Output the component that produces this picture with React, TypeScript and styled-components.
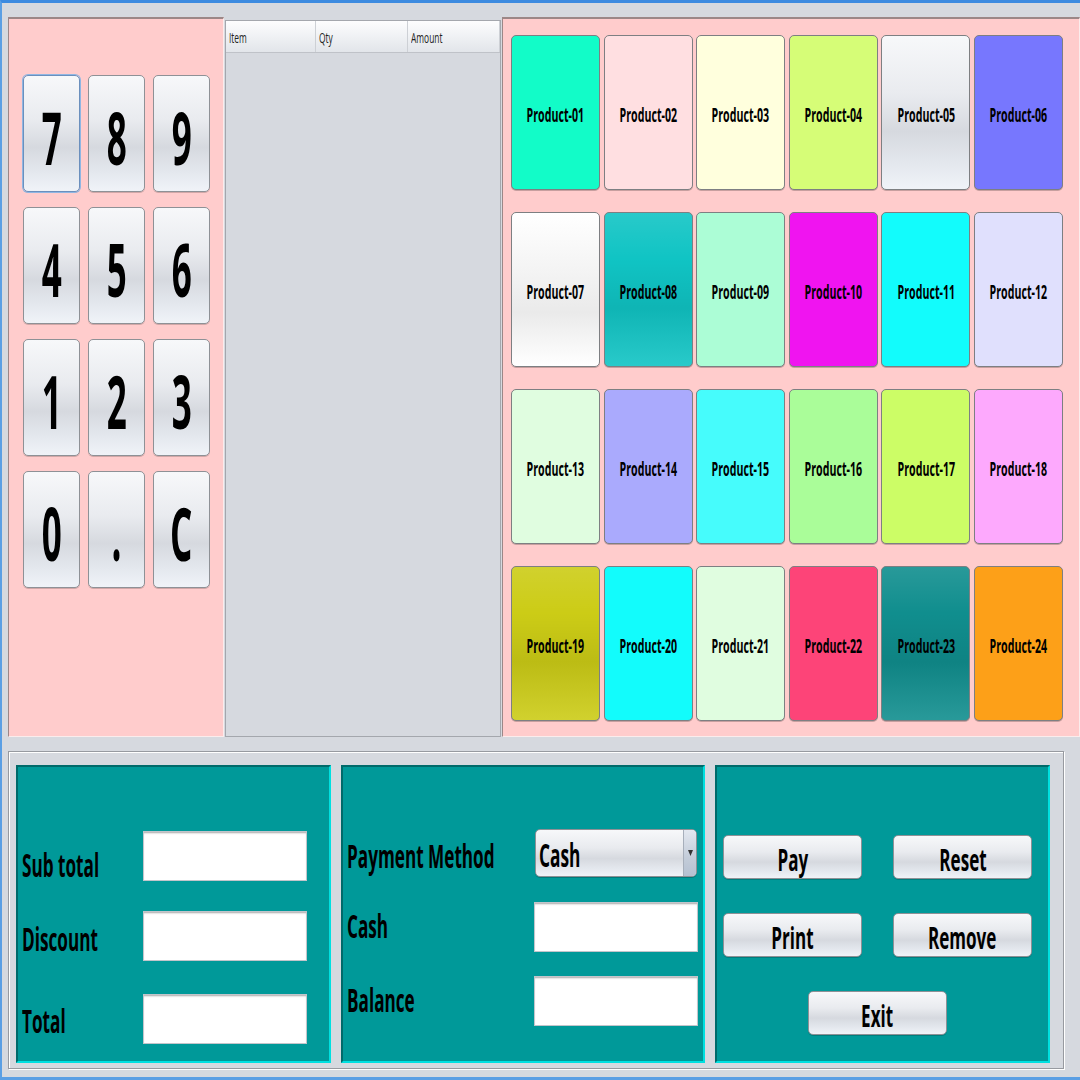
import React from 'react';
import styled, { createGlobalStyle } from 'styled-components';

const GlobalStyle = createGlobalStyle`
  html, body { margin: 0; padding: 0; background: #d6d9df; }
  body { font-family: 'Open Sans', 'Noto Sans', sans-serif; }
  * { box-sizing: border-box; }
`;

// Nimbus-like grey button surface
const nimbus = `linear-gradient(180deg, #f7f8fa 0%, #e9ebef 38%, #d6d9df 62%, #e4e8ee 84%, #f0f3f8 100%)`;

const Frame = styled.div`
  width: 1080px;
  height: 1080px;
  overflow: hidden;
  display: flex;
  flex-direction: column;
  background: #d6d9df;
  border-top: 3px solid #3d8be0;
  border-left: 2px solid #5b9fe4;
  border-bottom: 3px solid #5b9fe4;
`;

const TopArea = styled.div`
  display: flex;
  gap: 1px;
  height: 720px;
  margin: 14px 0 0 6px;
`;

const PinkPanel = styled.div<{ $width?: number }>`
  ${(p) => (p.$width ? `width: ${p.$width}px;` : 'flex: 1;')}
  background: #ffcccc;
  border: 1px solid;
  border-top-width: 2px;
  border-color: #9c8787 #fbecec #fbecec #9c8787;
`;

const Keypad = styled.div`
  display: grid;
  grid-template-columns: repeat(3, 57px);
  grid-auto-rows: 117px;
  column-gap: 8px;
  row-gap: 15px;
  padding: 56px 0 0 14px;
`;

const GreyButton = styled.button<{ $focused?: boolean; $textDrop?: number }>`
  display: flex;
  align-items: center;
  justify-content: center;
  padding: ${(p) => p.$textDrop ?? 0}px 0 0;
  overflow: visible;
  background: ${nimbus};
  border: 1px solid ${(p) => (p.$focused ? '#6b8fbd' : '#8e9196')};
  border-radius: 5px;
  box-shadow: ${(p) =>
    p.$focused ? '0 0 0 1px #8fb6e2, 0 1px 0 rgba(0,0,0,0.18)' : '0 1px 0 rgba(0,0,0,0.18)'};
  color: #000;
  font-family: 'Open Sans', 'Noto Sans', sans-serif;
  font-weight: 700;
  white-space: nowrap;
`;

const Squish = styled.span<{ $size: number; $sx: number; $left?: boolean; $weight?: number }>`
  display: inline-block;
  font-size: ${(p) => p.$size}px;
  font-weight: ${(p) => p.$weight ?? 700};
  line-height: 1;
  white-space: nowrap;
  transform: scaleX(${(p) => p.$sx});
  transform-origin: ${(p) => (p.$left ? 'left center' : 'center')};
`;

const TableBox = styled.div`
  width: 276px;
  margin-top: 3px;
  height: 717px;
  display: flex;
  flex-direction: column;
  border: 1px solid #a4a7ad;
  background: #d6d9df;
`;

const TableHead = styled.div`
  display: grid;
  grid-template-columns: 90px 92px 1fr;
  height: 32px;
  background: linear-gradient(180deg, #fdfdfe 0%, #eef0f3 55%, #e2e5ea 100%);
  border-bottom: 1px solid #bfc2c8;
`;

const HeadCell = styled.div`
  display: flex;
  align-items: center;
  padding: 2px 0 0 3px;
  border-right: 1px solid #cdd0d5;
  color: #222;
  overflow: visible;
`;

const ProductGrid = styled.div`
  display: grid;
  grid-template-columns: repeat(6, 89px);
  grid-auto-rows: 155px;
  column-gap: 3.6px;
  row-gap: 22px;
  padding: 16px 0 0 8px;
`;

const ProductButton = styled.button<{ $bg: string }>`
  display: flex;
  align-items: center;
  justify-content: center;
  padding: 5px 0 0;
  overflow: visible;
  background: ${(p) => p.$bg};
  border: 1px solid #7d7f82;
  border-radius: 5px;
  box-shadow: 0 1px 0 rgba(0, 0, 0, 0.22);
  color: #000;
  font-family: 'Open Sans', 'Noto Sans', sans-serif;
`;

const BottomArea = styled.div`
  display: flex;
  gap: 10px;
  width: 1056px;
  height: 318px;
  margin: 14px 0 0 6px;
  padding: 13px 0 0 7px;
  border: 1px solid #979aa0;
  box-shadow: inset 1px 1px 0 #fff, 1px 1px 0 #fff;
`;

const TealPanel = styled.div<{ $width: number }>`
  width: ${(p) => p.$width}px;
  height: 298px;
  background: #009999;
  border: 2px solid;
  border-color: #006a6a #00e0e0 #00e0e0 #006a6a;
`;

const FormBody = styled.div<{ $top: number }>`
  display: flex;
  flex-direction: column;
  padding: ${(p) => p.$top}px 0 0 4px;
`;

const FieldRow = styled.div<{ $h?: number; $mb?: number; $labelCol: number }>`
  display: grid;
  grid-template-columns: ${(p) => p.$labelCol}px auto;
  align-items: center;
  height: ${(p) => p.$h ?? 50}px;
  margin-bottom: ${(p) => p.$mb ?? 0}px;
`;

const FieldLabel = styled.span<{ $dy?: number }>`
  display: inline-block;
  margin-top: ${(p) => (p.$dy ?? 0) * 2}px;
  font-size: 33px;
  font-weight: 700;
  line-height: 1;
  color: #000;
  white-space: nowrap;
  transform: scaleX(0.52);
  transform-origin: left center;
`;

const TextField = styled.div`
  width: 164px;
  height: 50px;
  background: #fff;
  border: 1px solid #c2c5cb;
  box-shadow: inset 0 2px 2px -1px rgba(0, 0, 0, 0.35);
`;

const Combo = styled.div`
  display: flex;
  width: 162px;
  height: 48px;
  margin-left: 1px;
  background: ${nimbus};
  border: 1px solid #8e9196;
  border-radius: 5px;
  box-shadow: 0 1px 0 rgba(0, 0, 0, 0.2);
  overflow: hidden;
`;

const ComboText = styled.div`
  flex: 1;
  display: flex;
  align-items: center;
  padding: 4px 0 0 3px;
  color: #000;
`;

const ComboArrow = styled.div`
  width: 13px;
  display: flex;
  align-items: center;
  justify-content: center;
  border-left: 1px solid #a7afbb;
  background: linear-gradient(180deg, #e3e8f0 0%, #c3ccd9 60%, #b5c1d1 100%);
`;

const ActionGrid = styled.div`
  display: grid;
  grid-template-columns: 139px 139px;
  grid-auto-rows: 44px;
  column-gap: 31px;
  row-gap: 34px;
  padding: 68px 0 0 6px;
`;

const ActionButton = styled(GreyButton)<{ $wide?: boolean }>`
  ${(p) => (p.$wide ? 'grid-column: 1 / span 2; justify-self: center; width: 139px;' : '')}
`;

const keys = ['7', '8', '9', '4', '5', '6', '1', '2', '3', '0', '.', 'C'];

const overlay =
  'linear-gradient(180deg, rgba(255,255,255,0.1) 0%, rgba(255,255,255,0) 30%, rgba(0,0,0,0.08) 62%, rgba(255,255,255,0.1) 100%)';

// flat Nimbus tints; "shade" gets the darker mid-band that dark tints show
const productColors = [
  '#12fcc8', '#ffdfe1', '#ffffdd', '#d6fd77', 'grey', '#7777fe',
  'white', 'shade:#10c4c4', '#acfdd6', '#f014f0', '#12fcfc', '#e0e0fd',
  '#e0fde0', '#aaaafd', '#46fcfc', '#aafd99', '#ccfd66', '#fda9fd',
  'shade:#cccc16', '#12fcfc', '#e0fde0', '#fd4478', 'shade:#108e8e', '#fda018',
];

const productBg = (c: string) => {
  if (c === 'grey') return nimbus;
  if (c === 'white') return 'linear-gradient(180deg, #ffffff 0%, #f3f3f3 40%, #eaeaea 65%, #ffffff 100%)';
  if (c.startsWith('shade:')) return `${overlay}, ${c.slice(6)}`;
  return c;
};

const App = () => (
  <>
    <GlobalStyle />
    <Frame>
      <TopArea>
        <PinkPanel $width={216}>
          <Keypad>
            {keys.map((k, i) => (
              <GreyButton key={k} $focused={i === 0} $textDrop={5}>
                <Squish $size={73} $sx={0.48}>{k}</Squish>
              </GreyButton>
            ))}
          </Keypad>
        </PinkPanel>

        <TableBox>
          <TableHead>
            {['Item', 'Qty', 'Amount'].map((h) => (
              <HeadCell key={h}>
                <Squish $size={15} $sx={0.56} $left $weight={400}>{h}</Squish>
              </HeadCell>
            ))}
          </TableHead>
        </TableBox>

        <PinkPanel>
          <ProductGrid>
            {productColors.map((c, i) => (
              <ProductButton key={i} $bg={productBg(c)}>
                <Squish $size={19} $sx={0.56}>
                  Product-{String(i + 1).padStart(2, '0')}
                </Squish>
              </ProductButton>
            ))}
          </ProductGrid>
        </PinkPanel>
      </TopArea>

      <BottomArea>
        <TealPanel $width={315}>
          <FormBody $top={63}>
            <FieldRow $labelCol={121} $mb={31}>
              <FieldLabel $dy={9}>Sub total</FieldLabel>
              <TextField />
            </FieldRow>
            <FieldRow $labelCol={121} $mb={33}>
              <FieldLabel $dy={2}>Discount</FieldLabel>
              <TextField />
            </FieldRow>
            <FieldRow $labelCol={121}>
              <FieldLabel $dy={1}>Total</FieldLabel>
              <TextField />
            </FieldRow>
          </FormBody>
        </TealPanel>

        <TealPanel $width={364}>
          <FormBody $top={62}>
            <FieldRow $labelCol={187} $h={48} $mb={25}>
              <FieldLabel $dy={2}>Payment Method</FieldLabel>
              <Combo>
                <ComboText>
                  <Squish $size={32} $sx={0.54} $left>Cash</Squish>
                </ComboText>
                <ComboArrow>
                  <svg width="5" height="6" viewBox="0 0 5 6">
                    <path d="M0 0 H5 L2.5 6 Z" fill="#333" />
                  </svg>
                </ComboArrow>
              </Combo>
            </FieldRow>
            <FieldRow $labelCol={187} $mb={24}>
              <FieldLabel $dy={-2}>Cash</FieldLabel>
              <TextField />
            </FieldRow>
            <FieldRow $labelCol={187}>
              <FieldLabel $dy={-2}>Balance</FieldLabel>
              <TextField />
            </FieldRow>
          </FormBody>
        </TealPanel>

        <TealPanel $width={335}>
          <ActionGrid>
            {['Pay', 'Reset', 'Print', 'Remove'].map((b) => (
              <ActionButton key={b} $textDrop={4}>
                <Squish $size={31} $sx={0.55}>{b}</Squish>
              </ActionButton>
            ))}
            <ActionButton $wide $textDrop={4}>
              <Squish $size={31} $sx={0.55}>Exit</Squish>
            </ActionButton>
          </ActionGrid>
        </TealPanel>
      </BottomArea>
    </Frame>
  </>
);

export default App;
